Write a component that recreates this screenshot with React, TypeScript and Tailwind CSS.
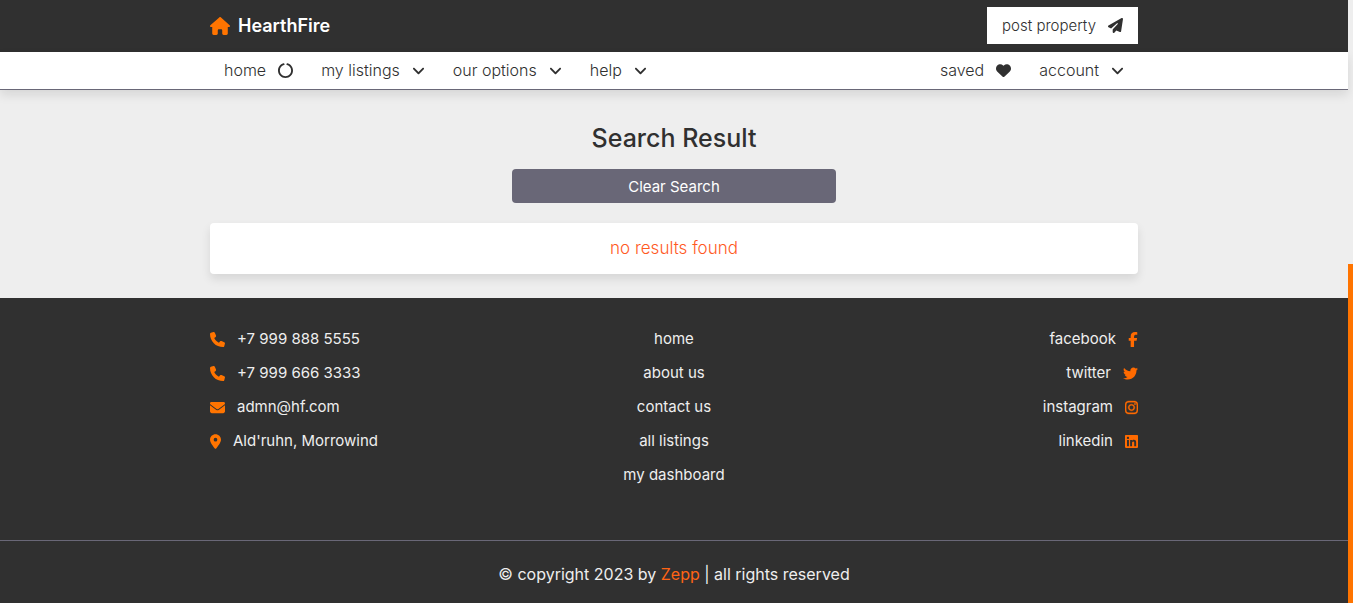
import type { ReactNode } from "react";
import {
  FaAngleDown,
  FaCircleNotch,
  FaEnvelope,
  FaFacebookF,
  FaHeart,
  FaHouse,
  FaInstagram,
  FaLinkedin,
  FaLocationDot,
  FaPaperPlane,
  FaPhone,
  FaTwitter,
} from "react-icons/fa6";

function NavItem({ label, icon }: { label: string; icon: ReactNode }) {
  return (
    <li>
      <a href="#" className="flex items-center gap-3 px-[14px] py-2">
        {label}
        {icon}
      </a>
    </li>
  );
}

const notch = <FaCircleNotch className="h-[15px] w-[15px]" />;
const heart = <FaHeart className="h-[15px] w-[15px]" />;
const angle = <FaAngleDown className="h-[15px] w-[13px]" />;

const contacts = [
  { label: "+7 999 888 5555", icon: <FaPhone /> },
  { label: "+7 999 666 3333", icon: <FaPhone /> },
  { label: "admn@hf.com", icon: <FaEnvelope /> },
  { label: "Ald'ruhn, Morrowind", icon: <FaLocationDot className="w-[11px]" /> },
];

const pages = ["home", "about us", "contact us", "all listings", "my dashboard"];

const socials = [
  { label: "facebook", icon: <FaFacebookF className="w-[10px]" /> },
  { label: "twitter", icon: <FaTwitter /> },
  { label: "instagram", icon: <FaInstagram className="w-[13px]" stroke="currentColor" strokeWidth="14" /> },
  { label: "linkedin", icon: <FaLinkedin className="w-[13px]" /> },
];

export default function App() {
  return (
    <div className="flex min-h-screen bg-[#eeeeee] font-['Inter',sans-serif] text-[15px] leading-[21px] text-[#303030]">
      <div className="flex min-w-0 flex-1 flex-col">
        <header>
          <div className="bg-[#303030] pt-[7px] pb-2">
            <div className="mx-auto flex w-full max-w-[928px] items-center justify-between">
              <a href="#" className="flex items-center gap-2 text-lg font-semibold text-white">
                <FaHouse className="h-5 w-5 text-[#ff7400]" />
                HearthFire
              </a>
              <a href="#" className="flex items-center gap-3 bg-white px-[15px] py-2 font-light">
                post property
                <FaPaperPlane />
              </a>
            </div>
          </div>
          <nav className="border-b border-[#696777] bg-white text-base leading-[21px] font-light shadow-[0_5px_10px_rgba(0,0,0,0.1)]">
            <div className="mx-auto flex w-full max-w-[928px] justify-between">
              <ul className="flex">
                <NavItem label="home" icon={notch} />
                <NavItem label="my listings" icon={angle} />
                <NavItem label="our options" icon={angle} />
                <NavItem label="help" icon={angle} />
              </ul>
              <ul className="flex">
                <NavItem label="saved" icon={heart} />
                <NavItem label="account" icon={angle} />
              </ul>
            </div>
          </nav>
        </header>

        <main className="mx-auto w-full max-w-[928px] pt-8 pb-6">
          <h1 className="text-center text-[25px] leading-8 font-medium">Search Result</h1>
          <button
            type="button"
            className="mx-auto mt-[15px] block h-[34px] w-[35%] rounded bg-[#696777] text-white"
          >
            Clear Search
          </button>
          <p className="mt-5 rounded bg-white py-[15px] text-center text-[17px] leading-[21px] font-light text-[#ff5a1f] shadow-[0_5px_10px_rgba(0,0,0,0.1)]">
            no results found
          </p>
        </main>

        <footer className="flex-1 bg-[#303030] text-[#eeeeee]">
          <div className="mx-auto flex w-full max-w-[928px] justify-between pt-6 pb-12 leading-[34px]">
            <ul className="flex-1">
              {contacts.map(({ label, icon }) => (
                <li key={label}>
                  <a href="#" className="flex items-center gap-3">
                    <span className="flex text-[#ff7400]">{icon}</span>
                    {label}
                  </a>
                </li>
              ))}
            </ul>
            <ul className="flex-1 text-center">
              {pages.map((label) => (
                <li key={label}>
                  <a href="#" className="block">
                    {label}
                  </a>
                </li>
              ))}
            </ul>
            <ul className="flex-1">
              {socials.map(({ label, icon }) => (
                <li key={label}>
                  <a href="#" className="flex items-center justify-end gap-3">
                    {label}
                    <span className="flex text-[#ff6a00]">{icon}</span>
                  </a>
                </li>
              ))}
            </ul>
          </div>
          <p className="border-t border-[#696777] py-[17px] text-center text-base leading-8">
            © copyright 2023 by <span className="text-[#ff6414]">Zepp</span> | all rights reserved
          </p>
        </footer>
      </div>

      <div className="sticky top-0 flex h-screen w-[5px] flex-col justify-end">
        <div className="h-[56.2%] bg-[#ff7400]" />
      </div>
    </div>
  );
}
